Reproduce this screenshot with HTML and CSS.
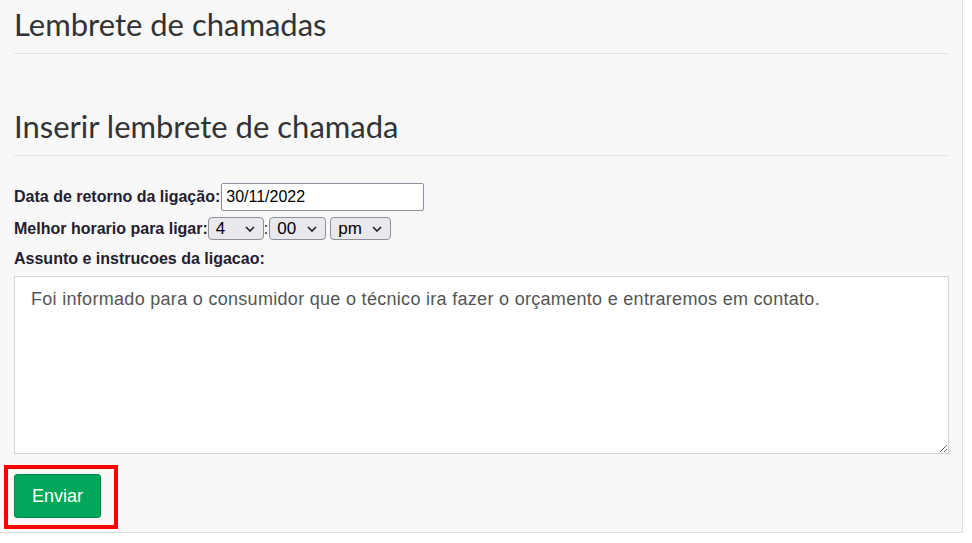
FILE: index.html
```html
<!DOCTYPE html>
<html lang="pt-BR">
<head>
    <meta charset="UTF-8">
    <meta name="viewport" content="width=device-width, initial-scale=1.0">
    <title>Lembrete de chamadas</title>
    <link rel="stylesheet" href="styles.css">
</head>
<body>
    <div class="panel">
        <h1 class="page-title">Lembrete de chamadas</h1>

        <h2 class="section-title">Inserir lembrete de chamada</h2>

        <form class="reminder-form">
            <div class="form-row row-date">
                <label for="dataRetorno">Data de retorno da ligação:</label>
                <input type="text" id="dataRetorno" class="date-input" value="30/11/2022">
            </div>

            <div class="form-row row-time">
                <label>Melhor horario para ligar:</label>
                <span class="select-wrap sel-hour">
                    <select class="time-select"><option>4</option></select>
                    <svg class="chevron" viewBox="0 0 10 6"><path d="M1 1l4 4 4-4"/></svg>
                </span>
                <span class="colon">:</span>
                <span class="select-wrap sel-min">
                    <select class="time-select"><option>00</option></select>
                    <svg class="chevron" viewBox="0 0 10 6"><path d="M1 1l4 4 4-4"/></svg>
                </span>
                <span class="select-wrap sel-ampm">
                    <select class="time-select"><option>pm</option></select>
                    <svg class="chevron" viewBox="0 0 10 6"><path d="M1 1l4 4 4-4"/></svg>
                </span>
            </div>

            <div class="form-row row-subject">
                <label for="assunto">Assunto e instrucoes da ligacao:</label>
            </div>

            <textarea id="assunto" class="subject-text">Foi informado para o consumidor que o técnico ira fazer o orçamento e entraremos em contato.</textarea>

            <div class="highlight-box">
                <button type="button" class="send-button">Enviar</button>
            </div>
        </form>
    </div>
</body>
</html>
```

FILE: styles.css
```css
* {
    box-sizing: border-box;
}

body {
    margin: 0;
    background: #ffffff;
    font-family: 'Liberation Sans', Arial, sans-serif;
    color: #1f2030;
}

/* Painel principal */
.panel {
    width: 963px;
    height: 533px;
    background: #f8f8f8;
    border-right: 1px solid #dcdcdc;
    border-bottom: 1px solid #dcdcdc;
    padding: 0 14px;
}

.page-title,
.section-title {
    font-family: Lato, 'Open Sans', sans-serif;
    font-weight: 400;
    font-size: 31px;
    color: #333333;
    margin: 0;
    border-bottom: 1px solid #e3e3e3;
    line-height: 1.1;
}

.page-title {
    padding-top: 7px;
    padding-bottom: 12px;
}

.section-title {
    margin-top: 55px;
    padding-bottom: 12px;
}

/* Formulario */
.reminder-form {
    padding-top: 27px;
}

.form-row {
    display: flex;
    align-items: center;
}

.form-row label {
    font-size: 16px;
    font-weight: bold;
}

.row-date {
    height: 28px;
    margin-bottom: 6px;
}

.date-input {
    width: 203px;
    height: 28px;
    margin-left: 1px;
    border: 1px solid #8f8f9d;
    border-radius: 2px;
    padding: 0 4px;
    font-family: 'Liberation Sans', Arial, sans-serif;
    font-size: 16px;
    color: #000000;
    background: #ffffff;
}

.row-time {
    height: 23px;
    margin-bottom: 10px;
}

.select-wrap {
    position: relative;
    display: block;
    height: 23px;
}

.time-select {
    appearance: none;
    -webkit-appearance: none;
    width: 100%;
    height: 23px;
    font-family: 'Liberation Sans', Arial, sans-serif;
    font-size: 17px;
    color: #000000;
    background: #e9e9ed;
    border: 1px solid #8f8f9d;
    border-radius: 4px;
    padding: 0 0 0 7px;
}

.chevron {
    position: absolute;
    right: 9px;
    top: 9px;
    width: 10px;
    height: 6px;
    fill: none;
    stroke: #1b1b1b;
    stroke-width: 1.6;
    pointer-events: none;
}

.sel-hour { width: 56px; }
.sel-min { width: 57px; }
.sel-ampm { width: 61px; margin-left: 4px; }

.colon {
    font-size: 16px;
    padding: 0 1px 0 0;
}

.row-subject {
    height: 18px;
}

.subject-text {
    display: block;
    width: 935px;
    height: 178px;
    margin-top: 8px;
    border: 1px solid #cfd3dc;
    background: #ffffff;
    padding: 10px 16px;
    font-family: 'Liberation Sans', Arial, sans-serif;
    font-size: 18px;
    letter-spacing: 0.3px;
    line-height: 24px;
    color: #555555;
    resize: vertical;
}

/* Caixa vermelha em volta do botao */
.highlight-box {
    display: inline-block;
    margin-top: 11px;
    margin-left: -10px;
    border: 4px solid #ff0000;
    padding: 5px 13px 7px 6px;
}

.send-button {
    display: block;
    width: 87px;
    height: 44px;
    background: #00a65a;
    border: 1px solid #008d4c;
    border-radius: 3px;
    color: #ffffff;
    font-family: 'Liberation Sans', Arial, sans-serif;
    font-size: 18px;
    cursor: pointer;
}
```
